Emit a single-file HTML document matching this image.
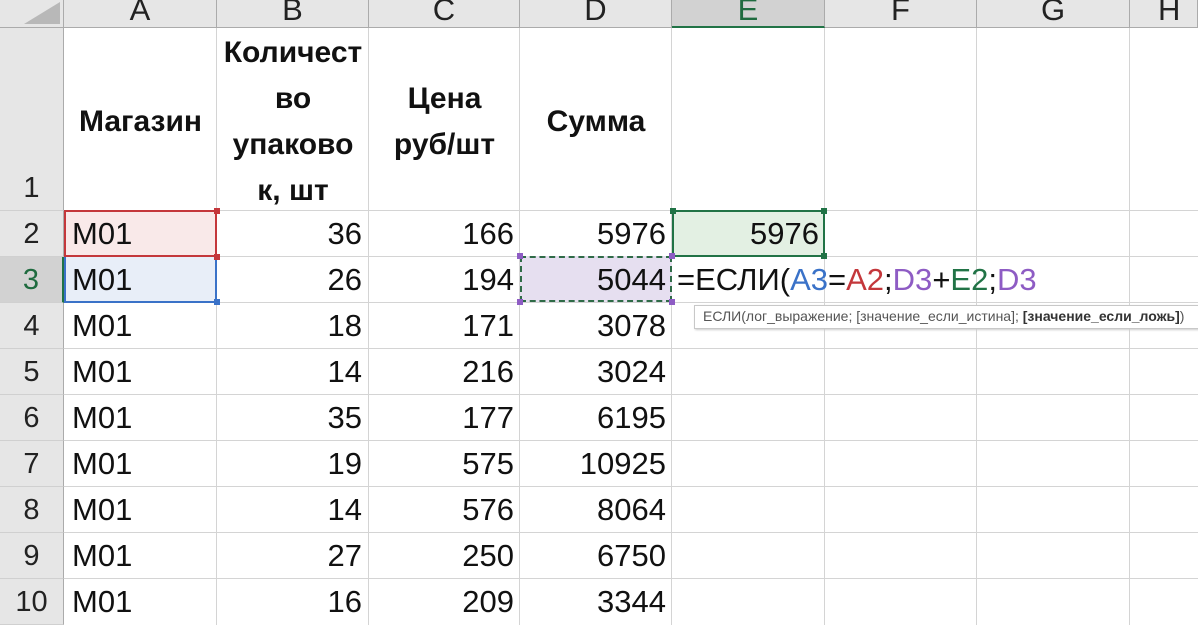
<!DOCTYPE html>
<html><head><meta charset="utf-8"><style>
body{margin:0;width:1198px;height:625px;overflow:hidden;background:#fff;font-family:"Liberation Sans","DejaVu Sans",sans-serif;position:relative}
.a{position:absolute}
.ch{position:absolute;top:0;height:28px;background:#e6e6e6;border-right:1px solid #ababab;border-bottom:1px solid #ababab;box-sizing:border-box;text-align:center;font-size:31px;line-height:20px;color:#222;overflow:hidden}
.rh{position:absolute;left:0;width:64px;background:#e6e6e6;border-right:1px solid #ababab;border-bottom:1px solid #d0d0d0;box-sizing:border-box;text-align:center;font-size:29px;color:#222}
.vl{position:absolute;top:28px;width:1px;height:597px;background:#d4d4d4}
.hl{position:absolute;left:64px;height:1px;width:1134px;background:#d4d4d4}
.c{position:absolute;font-size:31px;line-height:46px;color:#111;white-space:nowrap}
.r{text-align:right}
.h{position:absolute;font-weight:bold;font-size:30px;line-height:46px;text-align:center;color:#111;white-space:nowrap}
</style></head><body>
<div class="ch" style="left:0;width:64px"><div class="a" style="left:24px;top:2px;width:0;height:0;border-left:36px solid transparent;border-bottom:22px solid #b8b8b8"></div></div>
<div class="ch" style="left:64px;width:153px">A</div>
<div class="ch" style="left:217px;width:152px">B</div>
<div class="ch" style="left:369px;width:151px">C</div>
<div class="ch" style="left:520px;width:152px">D</div>
<div class="ch" style="left:672px;width:153px;background:#d2d2d2;color:#1f6b3f;border-bottom:2px solid #217346">E</div>
<div class="ch" style="left:825px;width:152px">F</div>
<div class="ch" style="left:977px;width:153px">G</div>
<div class="ch" style="left:1130px;width:68px;text-align:left;padding-left:28px">H</div>

<div class="vl" style="left:216px"></div><div class="vl" style="left:368px"></div><div class="vl" style="left:519px"></div><div class="vl" style="left:671px"></div><div class="vl" style="left:824px"></div><div class="vl" style="left:976px"></div><div class="vl" style="left:1129px"></div>
<div class="hl" style="top:210px"></div><div class="hl" style="top:256px"></div><div class="hl" style="top:302px"></div><div class="hl" style="top:348px"></div><div class="hl" style="top:394px"></div><div class="hl" style="top:440px"></div><div class="hl" style="top:486px"></div><div class="hl" style="top:532px"></div><div class="hl" style="top:578px"></div>

<div class="rh" style="top:28px;height:183px;line-height:46px;padding-top:137px">1</div>
<div class="rh" style="top:211px;height:46px;line-height:46px">2</div>
<div class="rh" style="top:257px;height:46px;line-height:46px;background:#d2d2d2;color:#1f6b3f;border-right:2px solid #217346">3</div>
<div class="rh" style="top:303px;height:46px;line-height:46px">4</div>
<div class="rh" style="top:349px;height:46px;line-height:46px">5</div>
<div class="rh" style="top:395px;height:46px;line-height:46px">6</div>
<div class="rh" style="top:441px;height:46px;line-height:46px">7</div>
<div class="rh" style="top:487px;height:46px;line-height:46px">8</div>
<div class="rh" style="top:533px;height:46px;line-height:46px">9</div>
<div class="rh" style="top:579px;height:46px;line-height:46px">10</div>

<div class="h" style="left:64px;width:153px;top:99px">Магазин</div>
<div class="h" style="left:217px;width:152px;top:30px">Количест<br>во<br>упаково<br>к, шт</div>
<div class="h" style="left:369px;width:151px;top:76px">Цена<br>руб/шт</div>
<div class="h" style="left:520px;width:152px;top:99px">Сумма</div>

<div class="a" style="left:64px;top:210px;width:153px;height:47px;background:#f9e9e9;box-sizing:border-box;border:2px solid #c4373b"></div>
<div class="a" style="left:64px;top:257px;width:153px;height:46px;background:#e8eef8;box-sizing:border-box;border:2px solid #3a72c8;border-top:none"></div>
<div class="a" style="left:520px;top:256px;width:152px;height:46px;background:#e6dff0;box-sizing:border-box;border:2px dashed #2f6b47"></div>
<div class="a" style="left:672px;top:210px;width:153px;height:47px;background:#e3f0e3;box-sizing:border-box;border:2px solid #217346"></div>
<div class="a" style="left:214px;top:208px;width:6px;height:6px;background:#c4373b"></div>
<div class="a" style="left:214px;top:254px;width:6px;height:6px;background:#c4373b"></div>
<div class="a" style="left:214px;top:299px;width:6px;height:6px;background:#3a72c8"></div>
<div class="a" style="left:517px;top:253px;width:6px;height:6px;background:#8e5cc4"></div>
<div class="a" style="left:669px;top:253px;width:6px;height:6px;background:#8e5cc4"></div>
<div class="a" style="left:517px;top:299px;width:6px;height:6px;background:#8e5cc4"></div>
<div class="a" style="left:669px;top:299px;width:6px;height:6px;background:#8e5cc4"></div>
<div class="a" style="left:670px;top:208px;width:6px;height:6px;background:#217346"></div>
<div class="a" style="left:821px;top:208px;width:6px;height:6px;background:#217346"></div>
<div class="a" style="left:821px;top:253px;width:6px;height:6px;background:#217346"></div>

<div class="c" style="left:72px;top:211px">M01</div><div class="c r" style="left:217px;width:145px;top:211px">36</div><div class="c r" style="left:369px;width:145px;top:211px">166</div><div class="c r" style="left:520px;width:146px;top:211px">5976</div><div class="c r" style="left:672px;width:147px;top:211px">5976</div>
<div class="c" style="left:72px;top:257px">M01</div><div class="c r" style="left:217px;width:145px;top:257px">26</div><div class="c r" style="left:369px;width:145px;top:257px">194</div><div class="c r" style="left:520px;width:146px;top:257px">5044</div>
<div class="c" style="left:677px;top:257px">=ЕСЛИ(<span style="color:#3a72c8">A3</span>=<span style="color:#c4373b">A2</span>;<span style="color:#8e5cc4">D3</span>+<span style="color:#217346">E2</span>;<span style="color:#8e5cc4">D3</span></div>
<div class="c" style="left:72px;top:303px">M01</div><div class="c r" style="left:217px;width:145px;top:303px">18</div><div class="c r" style="left:369px;width:145px;top:303px">171</div><div class="c r" style="left:520px;width:146px;top:303px">3078</div>
<div class="c" style="left:72px;top:349px">M01</div><div class="c r" style="left:217px;width:145px;top:349px">14</div><div class="c r" style="left:369px;width:145px;top:349px">216</div><div class="c r" style="left:520px;width:146px;top:349px">3024</div>
<div class="c" style="left:72px;top:395px">M01</div><div class="c r" style="left:217px;width:145px;top:395px">35</div><div class="c r" style="left:369px;width:145px;top:395px">177</div><div class="c r" style="left:520px;width:146px;top:395px">6195</div>
<div class="c" style="left:72px;top:441px">M01</div><div class="c r" style="left:217px;width:145px;top:441px">19</div><div class="c r" style="left:369px;width:145px;top:441px">575</div><div class="c r" style="left:520px;width:146px;top:441px">10925</div>
<div class="c" style="left:72px;top:487px">M01</div><div class="c r" style="left:217px;width:145px;top:487px">14</div><div class="c r" style="left:369px;width:145px;top:487px">576</div><div class="c r" style="left:520px;width:146px;top:487px">8064</div>
<div class="c" style="left:72px;top:533px">M01</div><div class="c r" style="left:217px;width:145px;top:533px">27</div><div class="c r" style="left:369px;width:145px;top:533px">250</div><div class="c r" style="left:520px;width:146px;top:533px">6750</div>
<div class="c" style="left:72px;top:579px">M01</div><div class="c r" style="left:217px;width:145px;top:579px">16</div><div class="c r" style="left:369px;width:145px;top:579px">209</div><div class="c r" style="left:520px;width:146px;top:579px">3344</div>

<div class="a" style="left:694px;top:305px;width:520px;height:22px;background:#fff;border:1px solid #c8c8c8;box-shadow:1px 1px 2px #ccc;font-size:14px;line-height:21px;color:#555;padding-left:8px;white-space:nowrap;overflow:hidden">ЕСЛИ(лог_выражение; [значение_если_истина]; <b style="color:#333">[значение_если_ложь]</b>)</div>
</body></html>
